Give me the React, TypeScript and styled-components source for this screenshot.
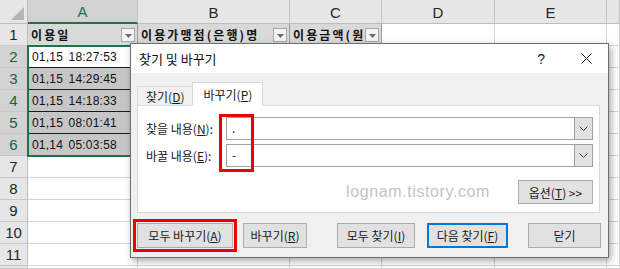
import React from "react";
import styled, { createGlobalStyle } from "styled-components";

const GlobalStyle = createGlobalStyle`
  html, body {
    margin: 0;
    overflow: hidden;
    background: #ffffff;
    font-family: "Noto Sans CJK KR", "Noto Sans", sans-serif;
  }
`;

const LETTERS = ["A", "B", "C", "D", "E", ""];
const TITLES = ["이용일", "이용가맹점(은행)명", "이용금액(원"];
const DATES = ["01,15 18:27:53", "01,15 14:29:45", "01,15 14:18:33", "01,15 08:01:41", "01,14 05:03:58"];
const ROWS = 11;

function Sheet() {
  const cells: React.ReactNode[] = [];
  cells.push(<Corner key="corner" />);
  LETTERS.forEach((l, i) => cells.push(<ColHead key={"h" + i} $active={i === 0}>{l}</ColHead>));

  // one extra sliver row below row 11, like the reference's bottom edge
  for (let r = 1; r <= ROWS + 1; r++) {
    const inSel = r >= 2 && r <= 6;
    cells.push(<RowHead key={"r" + r} $active={inSel}>{r <= ROWS ? r : ""}</RowHead>);
    for (let c = 0; c < LETTERS.length; c++) {
      if (r === 1 && c < 3) {
        cells.push(
          <TitleCell key={r + "-" + c}>
            <TitleText>{TITLES[c]}</TitleText>
            <FilterButton>
              <svg width="7" height="4" viewBox="0 0 7 4"><path d="M0 0h7L3.5 4z" fill="#6b6b6b" /></svg>
            </FilterButton>
          </TitleCell>
        );
      } else if (c === 0 && inSel) {
        cells.push(<DataCell key={r + "-" + c} $shaded={r !== 2}>{DATES[r - 2]}</DataCell>);
      } else {
        cells.push(<Cell key={r + "-" + c} />);
      }
    }
  }

  return (
    <Grid>
      {cells}
      <Selection />
    </Grid>
  );
}

function Chevron() {
  return (
    <svg width="9" height="5" viewBox="0 0 9 5">
      <path d="M0.5 0.5L4.5 4.5L8.5 0.5" stroke="#404040" strokeWidth="1" fill="none" />
    </svg>
  );
}

function Dialog() {
  return (
    <Window>
      <TitleBar>
        <TitleLabel>찾기 및 바꾸기</TitleLabel>
        <TitleIcons>
          <Help>?</Help>
          <svg width="11" height="11" viewBox="0 0 11 11">
            <path d="M0.5 0.5L10.5 10.5M10.5 0.5L0.5 10.5" stroke="#1a1a1a" strokeWidth="1" />
          </svg>
        </TitleIcons>
      </TitleBar>

      <Tabs>
        <Tab>찾기(<u>D</u>)</Tab>
        <Tab $active>바꾸기(<u>P</u>)</Tab>
      </Tabs>

      <Panel>
        <FieldRow>
          <FieldLabel>찾을 내용(<u>N</u>):</FieldLabel>
          <Combo>
            <ComboText>.</ComboText>
            <ComboButton><Chevron /></ComboButton>
          </Combo>
        </FieldRow>
        <FieldRow>
          <FieldLabel>바꿀 내용(<u>E</u>):</FieldLabel>
          <Combo>
            <ComboText>-</ComboText>
            <ComboButton><Chevron /></ComboButton>
          </Combo>
        </FieldRow>
        <OptionRow>
          <Watermark>lognam.tistory.com</Watermark>
          <Button $w={75} $h={24}>옵션(<u>T</u>) &gt;&gt;</Button>
        </OptionRow>
        <Highlight />
      </Panel>

      <ButtonRow>
        <Button $w={96} $marked>모두 바꾸기(<u>A</u>)</Button>
        <Button $w={64} $ml={10}>바꾸기(<u>R</u>)</Button>
        <Button $w={78} $ml={30}>모두 찾기(<u>I</u>)</Button>
        <Button $w={81} $ml={12} $default>다음 찾기(<u>F</u>)</Button>
        <Button $w={73} $ml={20}>닫기</Button>
      </ButtonRow>
    </Window>
  );
}

export default function App() {
  return (
    <>
      <GlobalStyle />
      <Page>
        <Sheet />
        <Dialog />
      </Page>
    </>
  );
}

const Page = styled.div`
  position: relative;
  width: 620px;
  height: 269px;
  overflow: hidden;
`;

const Grid = styled.div`
  position: relative;
  display: grid;
  grid-template-columns: 28px 110px 152px 92px 113px 112px 13px;
  grid-template-rows: 24px repeat(11, 22px) 3px;
`;

const Corner = styled.div`
  position: relative;
  background: #e6e6e6;
  border-right: 1px solid #bdbdbd;
  border-bottom: 1px solid #bdbdbd;
  &::after {
    content: "";
    position: absolute;
    right: 3px;
    bottom: 3px;
    border-left: 13px solid transparent;
    border-bottom: 13px solid #b5b5b5;
  }
`;

const ColHead = styled.div<{ $active?: boolean }>`
  display: flex;
  align-items: center;
  justify-content: center;
  background: ${(p) => (p.$active ? "#d2d2d2" : "#e6e6e6")};
  color: ${(p) => (p.$active ? "#217346" : "#262626")};
  border-right: 1px solid #c4c4c4;
  border-bottom: ${(p) => (p.$active ? "2px solid #217346" : "1px solid #bdbdbd")};
  font-family: "Liberation Sans", Arial, sans-serif;
  font-size: 15px;
  padding-top: 1px;
  box-sizing: border-box;
`;

const RowHead = styled.div<{ $active?: boolean }>`
  display: flex;
  align-items: center;
  justify-content: center;
  background: ${(p) => (p.$active ? "#d2d2d2" : "#e6e6e6")};
  color: ${(p) => (p.$active ? "#1d5e3c" : "#262626")};
  border-right: 1px solid #bdbdbd;
  border-bottom: 1px solid #c8c8c8;
  font-family: "Liberation Sans", Arial, sans-serif;
  font-size: 15px;
  box-sizing: border-box;
`;

const Cell = styled.div`
  border-right: 1px solid #d4d4d4;
  border-bottom: 1px solid #d4d4d4;
  box-sizing: border-box;
`;

const TitleCell = styled.div`
  display: flex;
  align-items: center;
  justify-content: space-between;
  gap: 2px;
  padding: 0 2px 0 3px;
  background: #d9d9d9;
  border-right: 1px solid #9a9a9a;
  border-bottom: 1px solid #4a4a4a;
  box-sizing: border-box;
  overflow: hidden;
`;

const TitleText = styled.span`
  font-size: 12px;
  font-weight: 700;
  letter-spacing: 2.1px;
  color: #111111;
  white-space: nowrap;
  overflow: hidden;
`;

const FilterButton = styled.span`
  flex: none;
  display: flex;
  align-items: center;
  justify-content: center;
  width: 14px;
  height: 14px;
  background: #f3f3f3;
  border: 1px solid #a6a6a6;
  padding-top: 2px;
  box-sizing: border-box;
`;

const DataCell = styled.div<{ $shaded?: boolean }>`
  display: flex;
  align-items: center;
  padding-left: 4px;
  background: ${(p) => (p.$shaded ? "#c6c6c6" : "#ffffff")};
  border-right: 1px solid #1a1a1a;
  border-bottom: 1px solid #1a1a1a;
  font-family: "Liberation Sans", Arial, sans-serif;
  font-size: 12px;
  letter-spacing: 0.2px;
  word-spacing: 2px;
  color: #111111;
  white-space: nowrap;
  box-sizing: border-box;
`;

const Selection = styled.div`
  position: absolute;
  left: 27px;
  top: 45px;
  width: 112px;
  height: 112px;
  border: 2px solid #217346;
  box-sizing: border-box;
  pointer-events: none;
`;

const Window = styled.div`
  position: absolute;
  left: 130px;
  top: 43px;
  width: 479px;
  height: 215px;
  display: flex;
  flex-direction: column;
  background: #f0f0f0;
  border: 1px solid #6f6f6f;
  box-sizing: border-box;
  box-shadow: 2px 3px 7px rgba(0, 0, 0, 0.35);
  font-size: 12px;
  color: #1a1a1a;
`;

const TitleBar = styled.div`
  display: flex;
  align-items: center;
  justify-content: space-between;
  height: 29px;
  padding: 0 16px 0 8px;
  background: #ffffff;
`;

const TitleLabel = styled.span`
  font-size: 13px;
  color: #111111;
`;

const TitleIcons = styled.div`
  display: flex;
  align-items: center;
  gap: 36px;
`;

const Help = styled.span`
  font-family: "Liberation Sans", Arial, sans-serif;
  font-size: 14px;
  color: #1a1a1a;
`;

const Tabs = styled.div`
  display: flex;
  align-items: flex-end;
  height: 24px;
  margin: 9px 0 -1px 6px;
  position: relative;
  z-index: 1;
`;

const Tab = styled.div<{ $active?: boolean }>`
  display: flex;
  align-items: center;
  justify-content: center;
  height: ${(p) => (p.$active ? "24px" : "20px")};
  padding: 0 ${(p) => (p.$active ? "10px" : "8px")};
  background: ${(p) => (p.$active ? "#ffffff" : "#f0f0f0")};
  border: 1px solid #d9d9d9;
  border-bottom: ${(p) => (p.$active ? "1px solid #ffffff" : "1px solid #d9d9d9")};
  margin-left: ${(p) => (p.$active ? "-1px" : "0")};
  box-sizing: border-box;
  font-size: 12px;
`;

const Panel = styled.div`
  position: relative;
  display: flex;
  flex-direction: column;
  gap: 4px;
  height: 108px;
  margin: 0 8px 0 6px;
  padding: 11px 6px 0 8px;
  background: #ffffff;
  border: 1px solid #d9d9d9;
  box-sizing: border-box;
`;

const FieldRow = styled.div`
  display: flex;
  align-items: center;
`;

const FieldLabel = styled.span`
  width: 80px;
  flex: none;
  white-space: nowrap;
`;

const Combo = styled.div`
  flex: 1;
  display: flex;
  height: 23px;
  border: 1px solid #a0a0a0;
  box-sizing: border-box;
  background: #ffffff;
`;

const ComboText = styled.span`
  flex: 1;
  padding-left: 5px;
  line-height: 20px;
  font-size: 12px;
`;

const ComboButton = styled.span`
  width: 17px;
  display: flex;
  align-items: center;
  justify-content: center;
  background: #e1e1e1;
  border-left: 1px solid #a0a0a0;
`;

const OptionRow = styled.div`
  display: flex;
  align-items: center;
  justify-content: flex-end;
  gap: 28px;
  margin-top: 9px;
`;

const Watermark = styled.span`
  font-family: "Liberation Sans", Arial, sans-serif;
  font-size: 16px;
  letter-spacing: 0.6px;
  color: #c3c3c3;
`;

const Highlight = styled.div`
  position: absolute;
  left: 81px;
  top: 8px;
  width: 35px;
  height: 58px;
  border: 3px solid #ee0000;
  box-sizing: border-box;
  pointer-events: none;
`;

const ButtonRow = styled.div`
  display: flex;
  margin: 10px 0 0 6px;
`;

const Button = styled.div<{ $w: number; $h?: number; $ml?: number; $default?: boolean; $marked?: boolean }>`
  display: flex;
  align-items: center;
  justify-content: center;
  width: ${(p) => p.$w}px;
  height: ${(p) => p.$h ?? 25}px;
  margin-left: ${(p) => p.$ml ?? 0}px;
  background: #e1e1e1;
  border: ${(p) => (p.$default ? "2px solid #0078d7" : "1px solid #adadad")};
  box-sizing: border-box;
  font-size: 12px;
  white-space: nowrap;
  outline: ${(p) => (p.$marked ? "3px solid #ee0000" : "none")};
  outline-offset: 1px;
`;
